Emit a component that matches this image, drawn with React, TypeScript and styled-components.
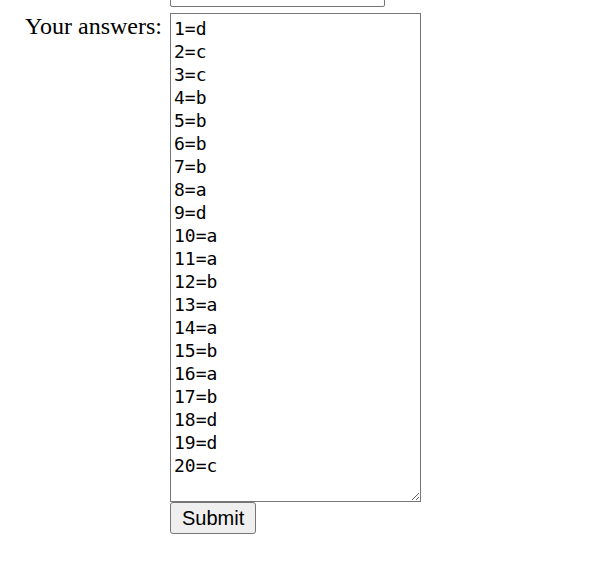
import React from "react";
import styled, { createGlobalStyle } from "styled-components";

const Global = createGlobalStyle`
  html, body {
    margin: 0;
    padding: 0;
    background: #ffffff;
    font-family: "Liberation Serif", "Times New Roman", serif;
  }
`;

const Form = styled.form`
  display: grid;
  grid-template-columns: 162px 251px;
  column-gap: 8px;
  align-items: start;
`;

const TopInput = styled.input`
  grid-column: 2;
  box-sizing: border-box;
  width: 215px;
  height: 30px;
  margin: -23px 0 6px 0;
  border: 1px solid #767676;
  border-radius: 2px;
  background: #fff;
`;

const Label = styled.label`
  grid-column: 1;
  text-align: right;
  font-size: 24px;
  line-height: 27px;
  color: #000;
  margin-top: 0;
  white-space: nowrap;
`;

const Answers = styled.textarea`
  grid-column: 2;
  display: block;
  box-sizing: border-box;
  width: 251px;
  height: 489px;
  margin: 0;
  padding: 3px 2px 1px 3px;
  border: 1px solid #767676;
  border-radius: 0;
  font-family: "DejaVu Sans Mono", "Liberation Mono", monospace;
  font-size: 18px;
  font-variant-numeric: slashed-zero;
  line-height: 23px;
  color: #000;
  background: #fff;
  overflow: hidden;
`;

const SubmitButton = styled.button`
  grid-column: 2;
  justify-self: start;
  box-sizing: border-box;
  height: 32px;
  padding: 0 11px;
  border: 1px solid #767676;
  border-radius: 3px;
  background: #efefef;
  color: #000;
  font-family: "Liberation Sans", Arial, sans-serif;
  font-size: 20px;
  line-height: 23px;
`;

const answers = [
  "d", "c", "c", "b", "b", "b", "b", "a", "d", "a",
  "a", "b", "a", "a", "b", "a", "b", "d", "d", "c",
];

export default function App() {
  const text = answers.map((a, i) => `${i + 1}=${a}`).join("\n") + "\n";
  return (
    <>
      <Global />
      <Form onSubmit={(e) => e.preventDefault()}>
        <TopInput type="text" />
        <Label htmlFor="answers">Your answers:</Label>
        <Answers id="answers" defaultValue={text} spellCheck={false} />
        <SubmitButton type="submit">Submit</SubmitButton>
      </Form>
    </>
  );
}
